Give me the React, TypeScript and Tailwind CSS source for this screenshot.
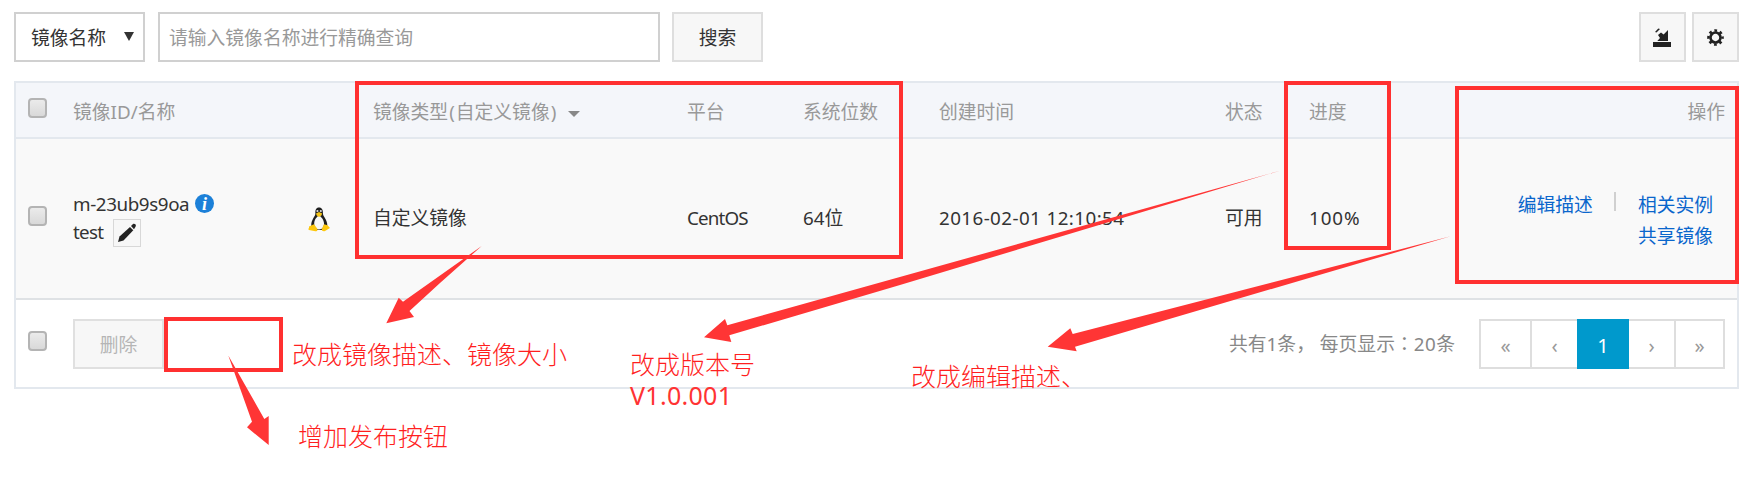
import React from "react";

const cell = "shrink-0 leading-[28px] whitespace-nowrap";

function Checkbox({ className = "" }: { className?: string }) {
  return (
    <span
      className={`block h-[20px] w-[19px] shrink-0 rounded-[4px] border-2 border-[#b4b4b4] bg-gradient-to-b from-[#ebebeb] to-[#d9d9d9] ${className}`}
    />
  );
}

function Penguin() {
  return (
    <svg width="22" height="25" viewBox="0 0 22 25">
      <path d="M11 0.500C8 .5 7.200 3 7.400 6c.1 2-1 3.400-2 5C4 13.500 3 16 3.300 19l5 4h6l5-4c.2-3-1-5.600-2.400-8-1-1.600-2-3-2-5C15.100 3 14 .5 11 .5z" fill="#1f1f1f" />
      <path d="M11 8.500c-2 1-4.500 4-4.800 7.500-.2 3 1 6.500 4.800 6.500s5.300-3.500 5-6.500c-.3-3.500-3-6.500-5-7.500z" fill="#f7f7f5" />
      <circle cx="9.400" cy="4" r="1.100" fill="#ddd" />
      <circle cx="12.800" cy="4" r="1.100" fill="#ddd" />
      <path d="M8 6.500l3-1.500 3.200 1.500-.8 2L11 10l-2.300-1.500z" fill="#f5c518" />
      <path d="M1 19.500l5-2.300L9.500 22c.3 1.500-.8 2.400-2.200 2.300L1 23c-1-.6-.6-1.200 0-2z" fill="#fdc70c" />
      <path d="M16 17.200l3.500 1L22 21l-5 3c-1.600.6-3.500-.2-3.300-1.700z" fill="#fdc70c" />
    </svg>
  );
}

function RedBox({ className }: { className: string }) {
  return <div className={`absolute border-[4px] border-[#ff3030] ${className}`} />;
}

function PageLink({ className, children }: { className: string; children: React.ReactNode }) {
  return (
    <span className={`flex h-full items-center justify-center pt-[4px] text-[20px] text-[#999] ${className}`}>
      {children}
    </span>
  );
}

export default function App() {
  return (
    <div className="relative h-[497px] w-[1747px] overflow-hidden bg-white pt-[12px] pl-[14px] font-['Noto_Sans','Noto_Sans_CJK_SC',sans-serif] text-[18.800px] text-[#333]">
      <div className="flex h-[50px] w-[1725px]">
        <div className="flex w-[131px] items-center justify-between border-2 border-[#d0d0d0] pt-[2px] pr-[9px] pl-[15px]">
          <span>镜像名称</span>
          <svg width="10" height="9" viewBox="0 0 10 9" className="-mt-[3px]"><path d="M0 0h10L5 9z" fill="#333" /></svg>
        </div>
        <div className="ml-[13px] flex w-[502px] items-center border-2 border-[#d0d0d0] pt-[2px] pl-[9px] text-[#999]">请输入镜像名称进行精确查询</div>
        <div className="ml-[12px] flex w-[91px] items-center justify-center border-2 border-[#dedede] bg-[#f7f7f7] pt-[2px]">搜索</div>
        <div className="ml-auto flex gap-[6px]">
          <div className="flex w-[47px] items-center justify-center border-2 border-[#dedede] bg-[#f7f7f7] pr-[2px]">
            <svg width="18" height="19" viewBox="0 0 18 19" fill="#222">
              <path d="M0 14h18v5H0z" />
              <path d="M15 2v11H4.300l2.700-3L5 7l3-2.400 2.600 2z" />
              <path d="M2 4l3.300-3.500L7 1 3.500 4.500z" />
            </svg>
          </div>
          <div className="flex w-[47px] items-center justify-center border-2 border-[#dedede] bg-[#f7f7f7]">
            <svg width="17" height="17" viewBox="-8.500 -8.500 17 17" fill="none" stroke="#222">
              <circle r="5" strokeWidth="2.600" />
              <circle r="7" strokeWidth="2.600" strokeDasharray="2.700 2.798" strokeDashoffset="1.350" />
            </svg>
          </div>
        </div>
      </div>

      <div className="mt-[19px] flex h-[308px] w-[1725px] flex-col border-2 border-[#e3e8ee]">
        <div className="flex h-[56px] items-center border-b-2 border-[#e3e8ee] bg-[#f4f6fa] pt-[4px] pl-[12px] text-[#999]">
          <Checkbox className="-mt-[9px]" />
          <span className={`ml-[26px] w-[300px] ${cell}`}>镜像ID/名称</span>
          <span className={`flex w-[314px] items-center ${cell}`}>
            镜像类型<span className="ml-[1px] mr-[1px]">(</span>自定义镜像<span className="ml-[1px]">)</span>
            <svg width="12" height="6" viewBox="0 0 12 6" className="mt-[4px] ml-[12px]"><path d="M0 0h12L6 6z" fill="#888" /></svg>
          </span>
          <span className={`w-[116px] ${cell}`}>平台</span>
          <span className={`w-[136px] ${cell}`}>系统位数</span>
          <span className={`w-[286px] ${cell}`}>创建时间</span>
          <span className={`w-[84px] ${cell}`}>状态</span>
          <span className={cell}>进度</span>
          <span className={`mr-[12px] ml-auto ${cell}`}>操作</span>
        </div>

        <div className="flex h-[161px] items-center border-b-2 border-[#dfe2e5] bg-[#f9f9f9] pb-[2px] pl-[12px]">
          <Checkbox className="-mt-[3px]" />
          <div className="ml-[26px] w-[235px] shrink-0">
            <div className="flex h-[28px] items-center">
              <span className={`w-[116px] tracking-[-0.400px] ${cell}`}>m-23ub9s9oa</span>
              <span className="ml-[6px] flex h-[19px] w-[19px] items-center justify-center rounded-full bg-[#1c80d8] font-['Liberation_Serif',serif] text-[18px] leading-none font-bold text-white italic">i</span>
            </div>
            <div className="flex h-[28px] items-center">
              <span className={`w-[40px] tracking-[-0.700px] ${cell}`}>test</span>
              <span className="mt-[2px] flex h-[28px] w-[28px] items-center justify-center border border-[#d8d8d8] bg-[#f7f7f7]">
                <svg width="20" height="20" viewBox="0 0 20 20" fill="#222">
                  <path d="M1 19l1.500-5.500L13 4l3.300 3.300L6.500 17.500z" />
                  <path d="M14 3l2-2c.8-.6 1.600-.4 2.300.2.6.7.8 1.500.2 2.600l-1.500 2.400z" />
                </svg>
              </span>
            </div>
          </div>
          <span className="mt-[4px] w-[65px] shrink-0"><Penguin /></span>
          <span className={`w-[314px] ${cell}`}>自定义镜像</span>
          <span className={`w-[116px] tracking-[-0.850px] ${cell}`}>CentOS</span>
          <span className={`w-[136px] ${cell}`}>64位</span>
          <span className={`w-[286px] tracking-[0.420px] ${cell}`}>2016-02-01 12:10:54</span>
          <span className={`w-[84px] ${cell}`}>可用</span>
          <span className={`tracking-[0.900px] ${cell}`}>100%</span>
          <div className="mt-[6px] mr-[24px] ml-auto flex items-start text-[#0a66cc]">
            <span className="leading-[31px]">编辑描述</span>
            <span className="mt-[2px] ml-[21px] h-[19px] w-[2px] bg-[#d0d0d0]" />
            <div className="ml-[22px] flex flex-col">
              <span className="leading-[31px]">相关实例</span>
              <span className="leading-[31px]">共享镜像</span>
            </div>
          </div>
        </div>

        <div className="flex flex-1 items-center pl-[12px]">
          <Checkbox className="-mt-[6px]" />
          <span className="ml-[26px] flex h-[50px] w-[91px] items-center justify-center border-2 border-[#e0e0e0] bg-[#f7f7f7] pt-[3px] text-[#b5b5b5]">删除</span>
          <span className="mr-[24px] ml-auto whitespace-nowrap text-[#888]">
            共有1条， 每页显示<span className="font-['Noto_Sans_CJK_TC',sans-serif]">：</span><span className="tracking-[0.500px]">20</span>条
          </span>
          <div className="mr-[12px] flex h-[50px] w-[246px] border-2 border-[#dedede]">
            <PageLink className="w-[49px]">«</PageLink>
            <PageLink className="w-[47px] border-l-2 border-[#dedede]">‹</PageLink>
            <span className="-my-[2px] flex w-[52px] items-center justify-center bg-[#0099cc] pt-[4px] text-[20px] text-white">1</span>
            <PageLink className="w-[45px]">›</PageLink>
            <PageLink className="w-[49px] border-l-2 border-[#dedede]">»</PageLink>
          </div>
        </div>
      </div>

      <RedBox className="top-[81px] left-[355px] h-[178px] w-[548px]" />
      <RedBox className="top-[81px] left-[1284px] h-[169px] w-[107px]" />
      <RedBox className="top-[86px] left-[1455px] h-[198px] w-[284px]" />
      <RedBox className="top-[317px] left-[164px] h-[55px] w-[119px]" />

      <svg className="absolute top-0 left-0" width="1747" height="497" fill="#ff3535">
        <path d="M481.700 246L403 301.700l-4.300-4L386.300 323.300 414 317l-4.500-6L440 283z" />
        <path d="M228.300 355.500L252 421.700l-5 5.600L268.700 445V416l-4.400 3z" />
        <path d="M1280 170.700L727.300 325.300 725 319l-21 18.300 27.300 4.700-2-6.700L900 285z" />
        <path d="M1450.700 236.300L1072.700 334l-2.400-5.700-22.600 18.400 29 4.600-1.700-4.600z" />
      </svg>

      <div className="text-[25px] leading-[30px] font-light whitespace-nowrap text-[#ff1f1f]">
        <span className="absolute top-[339px] left-[292px]">改成镜像描述、镜像大小</span>
        <span className="absolute top-[421px] left-[298px]">增加发布按钮</span>
        <div className="absolute top-[349px] left-[630px]">
          <div>改成版本号</div>
          <div className="pt-[1px] font-normal tracking-[0.300px] text-[#ff3333]">V1.0.001</div>
        </div>
        <span className="absolute top-[361px] left-[911px]">改成编辑描述、</span>
      </div>
    </div>
  );
}
